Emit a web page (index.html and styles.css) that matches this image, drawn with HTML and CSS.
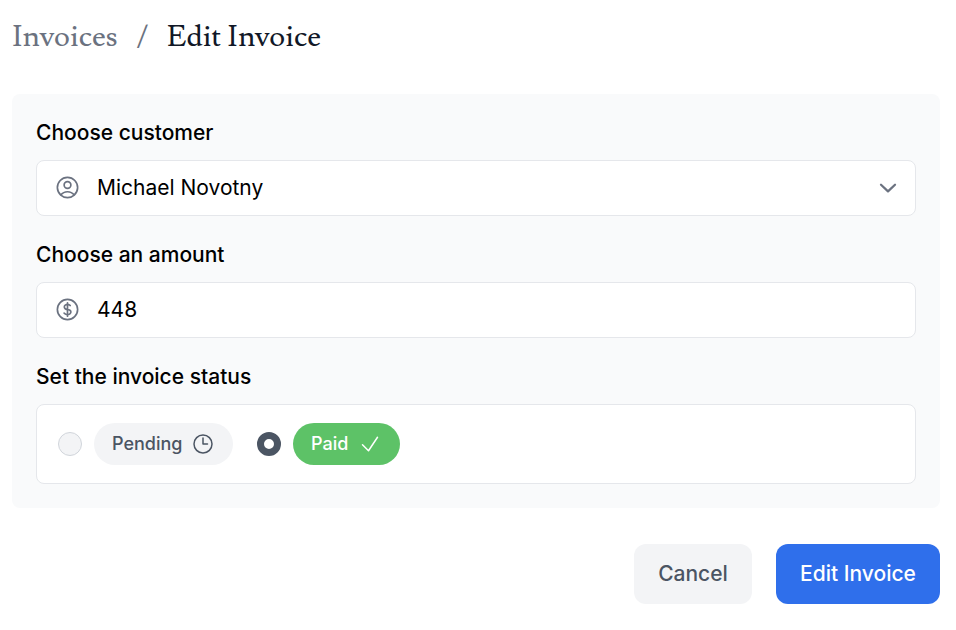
FILE: index.html
```html
<!DOCTYPE html>
<html lang="en">
<head>
<meta charset="utf-8">
<title>Edit Invoice</title>
<link rel="stylesheet" href="styles.css">
</head>
<body>
<main>
<nav class="breadcrumbs" aria-label="Breadcrumb"><a class="crumb-parent">Invoices</a><span class="slash">/</span><span class="crumb-current">Edit Invoice</span></nav>
<form>
<div class="panel">
<div class="field">
<div class="label customer-label">Choose customer</div>
<div class="control">
<svg class="icon" viewBox="0 0 24 24"><path d="M17.982 18.725A7.488 7.488 0 0 0 12 15.75a7.488 7.488 0 0 0-5.982 2.975m11.963 0a9 9 0 1 0-11.963 0m11.963 0A8.966 8.966 0 0 1 12 21a8.966 8.966 0 0 1-5.982-2.275M15 9.75a3 3 0 1 1-6 0 3 3 0 0 1 6 0Z"/></svg>
<span class="value customer-value">Michael Novotny</span>
<svg class="chevron" viewBox="0 0 20 12"><path d="M3 2.8 10 9.4 17 2.8"/></svg>
</div>
</div>
<div class="field">
<div class="label amount-label">Choose an amount</div>
<div class="control">
<svg class="icon" viewBox="0 0 24 24"><path d="M12 6v12m-3-2.818.879.659c1.171.879 3.07.879 4.242 0 1.172-.879 1.172-2.303 0-3.182C13.536 12.219 12.768 12 12 12c-.725 0-1.45-.22-2.003-.659-1.106-.879-1.106-2.303 0-3.182s2.9-.879 4.006 0l.415.33M21 12a9 9 0 1 1-18 0 9 9 0 0 1 18 0Z"/></svg>
<span class="value amount-value">448</span>
</div>
</div>
<div class="field">
<div class="label status-label">Set the invoice status</div>
<div class="control statuses">
<span class="radio"></span>
<span class="pill pending"><span class="pending-text">Pending</span><svg viewBox="0 0 24 24"><path d="M12 6v6h4.5m4.5 0a9 9 0 1 1-18 0 9 9 0 0 1 18 0Z"/></svg></span>
<span class="radio selected"></span>
<span class="pill paid"><span class="paid-text">Paid</span><svg viewBox="0 0 24 24"><path d="m4.5 12.75 6 6 9-13.5"/></svg></span>
</div>
</div>
</div>
<div class="actions"><a class="button cancel"><span class="cancel-text">Cancel</span></a><a class="button submit"><span class="submit-text">Edit Invoice</span></a></div>
</form>
</main>
</body>
</html>
```
FILE: styles.css
```css
* { box-sizing: border-box; }
body { margin: 0; background: #fff; font: 400 21px/28px Inter, sans-serif; color: #000; }
main { padding: 19px 16px 0 12px; }
svg { fill: none; stroke: currentColor; stroke-width: 1.5; stroke-linecap: round; stroke-linejoin: round; flex: none; }
.breadcrumbs { display: flex; height: 36px; margin-bottom: 39px; font: 400 30px/36px Lusitana, Newsreader, "Liberation Serif", serif; color: #6b7280; white-space: nowrap; }
.slash { margin: 0 18px; }
.crumb-current { color: #111827; }
.panel { height: 414px; padding: 25px 24px 24px; border-radius: 8px; background: #f9fafb; }
.label { height: 28px; margin-bottom: 13px; font-weight: 500; line-height: 28px; white-space: nowrap; }
.field { margin-bottom: 25px; }
.control { display: flex; align-items: center; height: 56px; padding: 0 17px; border: 1px solid #e5e7eb; border-radius: 8px; background: #fff; }
.icon { width: 27px; height: 27px; margin: 0 16px 1px 0; color: #6b7280; }
.value { white-space: nowrap; }
.chevron { width: 20px; height: 12px; margin-left: auto; color: #6b7280; stroke-width: 2.25; }
.statuses { height: 80px; padding: 0 21px; }
.radio { width: 24px; height: 24px; border: 1px solid #d1d5db; border-radius: 50%; background: #f3f4f6; }
.selected { border: 7px solid #4b5563; background: #fff; }
.pill { display: flex; align-items: center; height: 42px; margin-left: 12px; padding: 0 18px; border-radius: 21px; font-size: 18px; font-weight: 500; }
.pill svg { width: 24px; height: 24px; margin-left: 9px; }
.pending { width: 139px; margin-right: 24px; background: #f3f4f6; color: #4b5563; }
.paid { width: 107px; background: #5dc267; color: #fff; }
.pill.paid svg { margin-left: 10px; }
.actions { display: flex; justify-content: flex-end; gap: 24px; margin-top: 36px; }
.button { display: flex; align-items: center; justify-content: center; height: 60px; border-radius: 12px; font-weight: 500; }
.cancel { width: 118px; background: #f3f4f6; color: #4b5563; }
.submit { width: 164px; background: #2f6feb; color: #fff; }
```
